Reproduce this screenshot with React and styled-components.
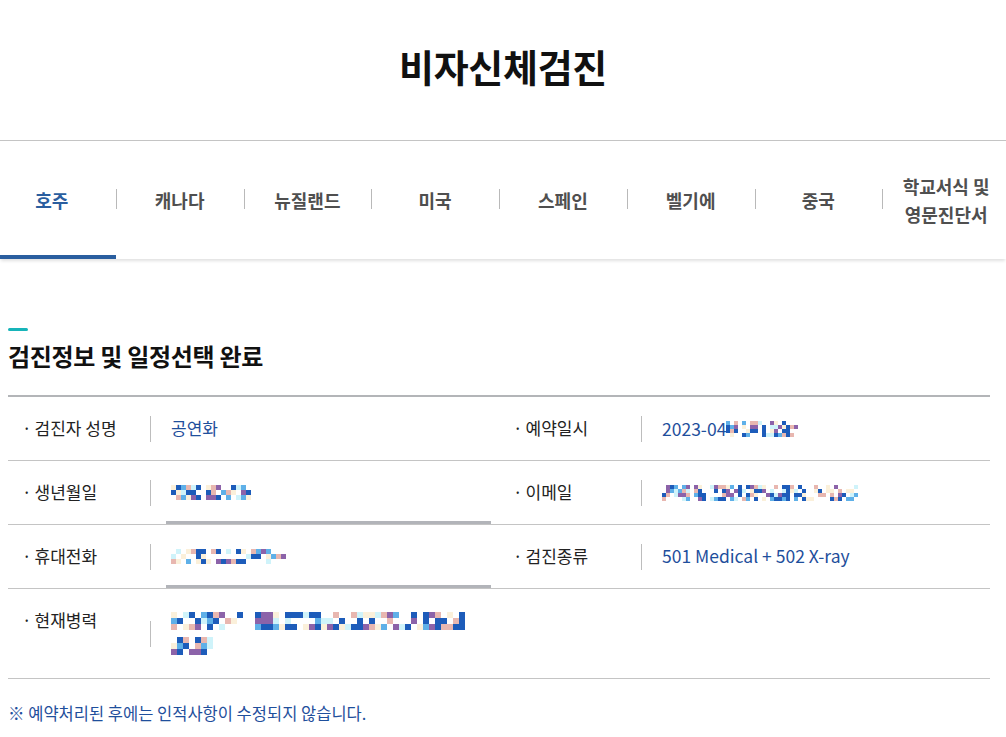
import { createGlobalStyle, styled } from "styled-components";

const GlobalStyle = createGlobalStyle`
  html, body {
    margin: 0;
    padding: 0;
    background: #fff;
    overflow-x: hidden;
  }
  body {
    font-family: "Noto Sans CJK KR", "Noto Sans", sans-serif;
    color: #222;
  }
`;

const Page = styled.div`
  width: 100%;
  overflow: hidden;
`;

const Header = styled.header`
  height: 141px;
  display: flex;
  align-items: center;
  justify-content: center;
  padding-bottom: 10px;
  box-sizing: border-box;
  border-bottom: 1px solid #c4c4c4;
`;

const Title = styled.h1`
  margin: 0;
  font-size: 38px;
  font-weight: 700;
  color: #111;
  letter-spacing: -0.3px;
`;

const TabBar = styled.nav`
  height: 118px;
  box-shadow: 0 3px 3px -1px rgba(0, 0, 0, 0.12);
`;

const TabList = styled.ul`
  list-style: none;
  margin: 0 0 0 -12px;
  padding: 0;
  width: calc(100% + 16px);
  height: 100%;
  display: grid;
  grid-template-columns: repeat(8, 1fr);
`;

const Tab = styled.li`
  position: relative;
  display: flex;
  align-items: center;
  justify-content: center;
  text-align: center;
  font-size: 18px;
  font-weight: 700;
  line-height: 28px;
  color: ${(p) => (p.$active ? "#2a5e9f" : "#4f4f4f")};
  box-sizing: border-box;
  border-bottom: 4px solid ${(p) => (p.$active ? "#2a5e9f" : "transparent")};
  padding-top: 4px;

  &:not(:first-child)::before {
    content: "";
    position: absolute;
    left: 0;
    top: 50%;
    width: 1px;
    height: 20px;
    margin-top: -9px;
    background: #b9b9b9;
  }
`;

const Section = styled.section`
  padding: 69px 16px 0 8px;
`;

const Mark = styled.span`
  display: block;
  width: 20px;
  height: 3px;
  border-radius: 2px;
  background: #17b4b9;
`;

const Heading = styled.h2`
  margin: 10px 0 24px;
  font-size: 24px;
  line-height: 30px;
  font-weight: 700;
  color: #111;
  letter-spacing: -0.3px;
`;

const Table = styled.div`
  border-top: 2px solid #b3b5b8;
  border-bottom: 1px solid #c4c4c4;
`;

const Row = styled.div`
  display: grid;
  grid-template-columns: 143px 348px 143px 348px;
  & + & {
    border-top: 1px solid #c4c4c4;
  }
`;

const Label = styled.div`
  position: relative;
  padding: 19px 0 19px 14px;
  font-size: 17px;
  line-height: 24px;
  color: #222;

  &::before {
    content: "·";
    margin-right: 3px;
  }
  &::after {
    content: "";
    position: absolute;
    right: 0;
    top: 50%;
    width: 1px;
    height: 26px;
    margin-top: -13px;
    background: #bdbdbd;
  }
`;

const Value = styled.div`
  position: relative;
  padding: ${(p) => (p.$tall ? "19px 20px 20px" : "19px 20px")};
  font-size: 17px;
  line-height: ${(p) => (p.$tall ? "25px" : "24px")};
  color: #1f4f9c;

  ${(p) =>
    p.$underline &&
    `
    &::after {
      content: "";
      position: absolute;
      left: 15px;
      right: 8px;
      bottom: 0;
      height: 3px;
      background: #b2b4b9;
    }
  `}
`;

const Latin = styled.span`
  font-size: 17.5px;
`;

const Line = styled.div`
  display: flex;
  align-items: center;
  height: 25px;
`;

const MosaicGrid = styled.span`
  display: inline-grid;
  vertical-align: middle;
  grid-auto-rows: ${(p) => p.$cell}px;
  grid-template-columns: repeat(${(p) => p.$cols}, ${(p) => p.$cell}px);
`;

const Footnote = styled.p`
  margin: 22px 0 0;
  font-size: 16.5px;
  line-height: 24px;
  color: #1f4f9c;
`;

const palette = [
  "#1d5cba",
  "#1d5cba",
  "#5fb0e8",
  "#8c63a9",
  "#e8b7b0",
  "#cff3fa",
  "#fbf0da",
  "transparent",
  "transparent",
  "transparent",
  "transparent",
];

function Mosaic({ cols, rows, cell = 5, seed = 1 }) {
  let s = seed * 9301 + 49297;
  const rand = () => {
    s = (s * 9301 + 49297) % 233280;
    return s / 233280;
  };
  const cells = [];
  for (let i = 0; i < cols * rows; i++) {
    cells.push(palette[Math.floor(rand() * palette.length)]);
  }
  return (
    <MosaicGrid $cols={cols} $cell={cell}>
      {cells.map((c, i) => (
        <span key={i} style={{ background: c }} />
      ))}
    </MosaicGrid>
  );
}

const tabs = ["호주", "캐나다", "뉴질랜드", "미국", "스페인", "벨기에", "중국"];

export default function App() {
  return (
    <Page>
      <GlobalStyle />
      <Header>
        <Title>비자신체검진</Title>
      </Header>
      <TabBar>
        <TabList>
          {tabs.map((t, i) => (
            <Tab key={t} $active={i === 0}>
              {t}
            </Tab>
          ))}
          <Tab>
            학교서식 및
            <br />
            영문진단서
          </Tab>
        </TabList>
      </TabBar>

      <Section>
        <Mark />
        <Heading>검진정보 및 일정선택 완료</Heading>
        <Table>
          <Row>
            <Label>검진자 성명</Label>
            <Value>공연화</Value>
            <Label>예약일시</Label>
            <Value>
              <Line>
                <Latin>2023-04</Latin>
                <Mosaic cols={18} rows={4} cell={4} seed={3} />
              </Line>
            </Value>
          </Row>
          <Row>
            <Label>생년월일</Label>
            <Value $underline>
              <Line>
                <Mosaic cols={16} rows={3} cell={5} seed={7} />
              </Line>
            </Value>
            <Label>이메일</Label>
            <Value>
              <Line>
                <Mosaic cols={49} rows={4} cell={4} seed={11} />
              </Line>
            </Value>
          </Row>
          <Row>
            <Label>휴대전화</Label>
            <Value $underline>
              <Line>
                <Mosaic cols={23} rows={3} cell={5} seed={5} />
              </Line>
            </Value>
            <Label>검진종류</Label>
            <Value>
              <Latin>501 Medical + 502 X-ray</Latin>
            </Value>
          </Row>
          <Row>
            <Label>현재병력</Label>
            <Value $tall>
              <Line>
                <Mosaic cols={49} rows={3} cell={6} seed={13} />
              </Line>
              <Line>
                <Mosaic cols={7} rows={3} cell={6} seed={17} />
              </Line>
            </Value>
            <div />
            <div />
          </Row>
        </Table>
        <Footnote>※ 예약처리된 후에는 인적사항이 수정되지 않습니다.</Footnote>
      </Section>
    </Page>
  );
}
